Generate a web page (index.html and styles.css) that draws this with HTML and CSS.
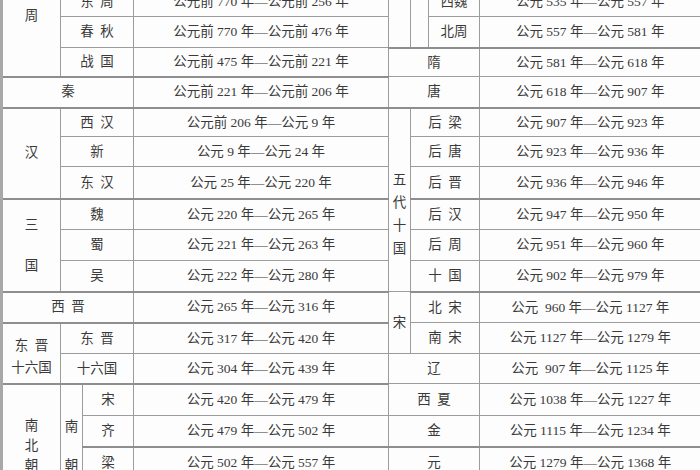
FILE: index.html
```html
<!DOCTYPE html>
<html lang="zh">
<head>
<meta charset="utf-8">
<title>中国历史朝代年表</title>
<link rel="stylesheet" href="styles.css">
</head>
<body>
<table class="chrono">
<colgroup>
<col class="c1"><col class="c2"><col class="c3"><col class="c4"><col class="c5"><col class="c6"><col class="c7"><col class="c8">
</colgroup>
<tbody>
<tr>
<td rowspan="4" class="zhou tb">周</td><td colspan="2">西&ensp;周</td><td>约公元前 1046 年—公元前 771 年</td>
<td rowspan="3" class="tb"></td><td rowspan="3" class="tb"></td><td>北齐</td><td>公元 550 年—公元 577 年</td>
</tr>
<tr class="h30">
<td colspan="2">东&ensp;周</td><td>公元前 770 年—公元前 256 年</td>
<td>西魏</td><td>公元 535 年—公元 557 年</td>
</tr>
<tr>
<td colspan="2">春&ensp;秋</td><td>公元前 770 年—公元前 476 年</td>
<td class="tb">北周</td><td class="tb">公元 557 年—公元 581 年</td>
</tr>
<tr class="h29">
<td colspan="2" class="tb">战&ensp;国</td><td class="tb">公元前 475 年—公元前 221 年</td>
<td colspan="3">隋</td><td>公元 581 年—公元 618 年</td>
</tr>
<tr>
<td colspan="3" class="tb">秦</td><td class="tb">公元前 221 年—公元前 206 年</td>
<td colspan="3" class="tb">唐</td><td class="tb">公元 618 年—公元 907 年</td>
</tr>
<tr class="h29">
<td rowspan="3" class="tb">汉</td><td colspan="2">西&ensp;汉</td><td>公元前 206 年—公元 9 年</td>
<td rowspan="6" class="wudai">五<br>代<br>十<br>国</td><td colspan="2">后&ensp;梁</td><td>公元 907 年—公元 923 年</td>
</tr>
<tr class="h30">
<td colspan="2">新</td><td>公元 9 年—公元 24 年</td>
<td colspan="2">后&ensp;唐</td><td>公元 923 年—公元 936 年</td>
</tr>
<tr class="h32">
<td colspan="2" class="tb">东&ensp;汉</td><td class="tb">公元 25 年—公元 220 年</td>
<td colspan="2" class="tb">后&ensp;晋</td><td class="tb">公元 936 年—公元 946 年</td>
</tr>
<tr>
<td rowspan="3" class="sanguo tb">三<br>国</td><td colspan="2">魏</td><td>公元 220 年—公元 265 年</td>
<td colspan="2">后&ensp;汉</td><td>公元 947 年—公元 950 年</td>
</tr>
<tr>
<td colspan="2">蜀</td><td>公元 221 年—公元 263 年</td>
<td colspan="2">后&ensp;周</td><td>公元 951 年—公元 960 年</td>
</tr>
<tr>
<td colspan="2" class="tb">吴</td><td class="tb">公元 222 年—公元 280 年</td>
<td colspan="2" class="tb">十&ensp;国</td><td class="tb">公元 902 年—公元 979 年</td>
</tr>
<tr>
<td colspan="3" class="tb">西&ensp;晋</td><td class="tb">公元 265 年—公元 316 年</td>
<td rowspan="2">宋</td><td colspan="2">北&ensp;宋</td><td>公元&nbsp; 960 年—公元 1127 年</td>
</tr>
<tr>
<td rowspan="2" class="dongjin tb">东&ensp;晋<br>十六国</td><td colspan="2">东&ensp;晋</td><td>公元 317 年—公元 420 年</td>
<td colspan="2">南&ensp;宋</td><td>公元 1127 年—公元 1279 年</td>
</tr>
<tr class="h30">
<td colspan="2" class="tb">十六国</td><td class="tb">公元 304 年—公元 439 年</td>
<td colspan="3">辽</td><td>公元&nbsp; 907 年—公元 1125 年</td>
</tr>
<tr class="h32">
<td rowspan="4" class="nbc">南<br>北<br>朝</td><td rowspan="4" class="nanchao">南<br>朝</td><td>宋</td><td>公元 420 年—公元 479 年</td>
<td colspan="3">西&ensp;夏</td><td>公元 1038 年—公元 1227 年</td>
</tr>
<tr>
<td class="tb">齐</td><td class="tb">公元 479 年—公元 502 年</td>
<td colspan="3" class="tb">金</td><td class="tb">公元 1115 年—公元 1234 年</td>
</tr>
<tr>
<td>梁</td><td>公元 502 年—公元 557 年</td>
<td colspan="3">元</td><td>公元 1279 年—公元 1368 年</td>
</tr>
<tr>
<td>陈</td><td>公元 557 年—公元 589 年</td>
<td colspan="3">明</td><td>公元 1368 年—公元 1644 年</td>
</tr>
</tbody>
</table>
</body>
</html>
```

FILE: styles.css
```css
html, body {
  margin: 0;
  padding: 0;
  background: #fdfdfd;
}
body {
  width: 700px;
  height: 470px;
  overflow: hidden;
}
.chrono {
  border-collapse: collapse;
  table-layout: fixed;
  width: 700px;
  margin-top: -45px;
  font-family: "Liberation Serif", "Noto Sans CJK SC", serif;
  font-size: 13.5px;
  color: #3a3a3a;
  border-left: 3px solid #a8a8a8;
  border-right: 2px solid #9a9a9a;
}
.c1 { width: 59px; }
.c2 { width: 22px; }
.c3 { width: 51px; }
.c4 { width: 255px; }
.c5 { width: 22px; }
.c6 { width: 18px; }
.c7 { width: 51px; }
.c8 { width: 222px; }
.chrono tr { height: 31px; }
.chrono tr.h29 { height: 29px; }
.chrono tr.h30 { height: 30px; }
.chrono tr.h32 { height: 32px; }
.chrono td {
  border: 1px solid #9c9c9c;
  padding: 0;
  text-align: center;
  vertical-align: middle;
  white-space: nowrap;
  line-height: 1;
  overflow: hidden;
}
.chrono td.tb { border-bottom: 2px solid #8e8e8e; }
.chrono td.wudai { line-height: 23px; padding-top: 28px; }
.chrono td.sanguo { line-height: 41px; }
.chrono td.dongjin { line-height: 22px; padding-top: 8px; }
.chrono td.nbc { line-height: 20px; }
.chrono td.nanchao { line-height: 39px; }
```
